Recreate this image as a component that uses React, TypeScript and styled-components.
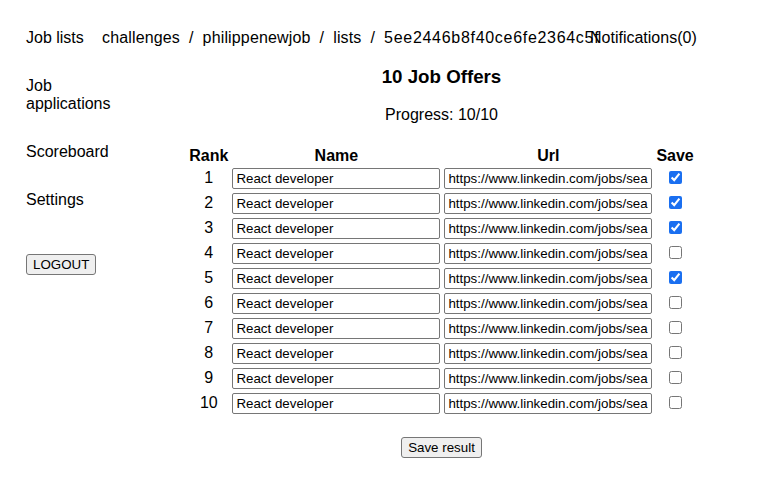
import React from "react";
import styled, { createGlobalStyle } from "styled-components";

const GlobalStyle = createGlobalStyle`
  html, body { margin: 0; padding: 0; background: #ffffff; }
  body {
    margin: 8px;
    font-family: "Liberation Sans", Arial, Helvetica, sans-serif;
    font-size: 16px;
    color: #000000;
  }
`;

const Page = styled.div`
  display: flex;
  flex-direction: column;
`;

const Header = styled.header`
  display: grid;
  grid-template-columns: 76px 488px auto;
  align-items: center;
  padding: 21px 0 0 18px;
  height: 18px;
  line-height: 18px;
  white-space: nowrap;
`;

const HeaderLink = styled.span`
  color: #000;
`;

const Breadcrumb = styled.span`
  overflow: visible;
  white-space: nowrap;
  letter-spacing: 0.15px;
`;

const Sep = styled.span`
  padding: 0 9px;
`;

const Hash = styled.span`
  letter-spacing: 0.7px;
`;

const Body = styled.div`
  display: flex;
  padding-top: 10px;
`;

const Sidebar = styled.nav`
  width: 86px;
  padding: 20px 0 0 18px;
  display: flex;
  flex-direction: column;
  align-items: flex-start;
  gap: 30px;
  line-height: 18px;
`;

const NavItem = styled.span`
  color: #000;
`;

const Button = styled.button`
  font-family: "Liberation Sans", Arial, Helvetica, sans-serif;
  font-size: 13.33px;
  line-height: 15px;
  color: #000;
  background: #efefef;
  border: 1px solid #767676;
  border-radius: 3px;
  padding: 2px 6px;
  cursor: pointer;
`;

const LogoutButton = styled(Button)`
  margin-top: 15px;
`;

const Main = styled.main`
  flex: 1;
  display: flex;
  flex-direction: column;
  align-items: center;
`;

const Title = styled.h3`
  font-size: 18.72px;
  font-weight: bold;
  line-height: 21.5px;
  margin: 9px 0 18px;
`;

const Progress = styled.div`
  line-height: 18px;
  margin-bottom: 19px;
`;

const Table = styled.table`
  border-collapse: separate;
  border-spacing: 2px;
`;

const Th = styled.th`
  padding: 2px 1px 0;
  font-weight: bold;
  line-height: 18px;
  text-align: center;
`;

const Td = styled.td`
  padding: 1px;
  text-align: center;
  line-height: 18px;
`;

const TextInput = styled.input`
  box-sizing: border-box;
  width: 208px;
  height: 21px;
  font-family: "Liberation Sans", Arial, Helvetica, sans-serif;
  font-size: 13.33px;
  color: #000;
  border: 1px solid #767676;
  border-radius: 2px;
  padding: 2px 3px;
  margin: 0;
  display: block;
`;

const Check = styled.input`
  width: 13px;
  height: 13px;
  margin: 3px 3px 3px 4px;
  accent-color: #1a6ff0;
`;

const SaveButton = styled(Button)`
  margin-top: 20px;
`;

const saved = [true, true, true, false, true, false, false, false, false, false];
const url =
  "https://www.linkedin.com/jobs/search/?keywords=react%20developer&location=Paris";

export default function App() {
  return (
    <Page>
      <GlobalStyle />
      <Header>
        <HeaderLink>Job lists</HeaderLink>
        <Breadcrumb>
          challenges<Sep>/</Sep>philippenewjob<Sep>/</Sep>lists<Sep>/</Sep>
          <Hash>5ee2446b8f40ce6fe2364c5f</Hash>
        </Breadcrumb>
        <HeaderLink>Notifications(0)</HeaderLink>
      </Header>
      <Body>
        <Sidebar>
          <NavItem>Job applications</NavItem>
          <NavItem>Scoreboard</NavItem>
          <NavItem>Settings</NavItem>
          <LogoutButton>LOGOUT</LogoutButton>
        </Sidebar>
        <Main>
          <Title>10 Job Offers</Title>
          <Progress>Progress: 10/10</Progress>
          <Table>
            <thead>
              <tr>
                <Th>Rank</Th>
                <Th>Name</Th>
                <Th>Url</Th>
                <Th>Save</Th>
              </tr>
            </thead>
            <tbody>
              {saved.map((s, i) => (
                <tr key={i}>
                  <Td>{i + 1}</Td>
                  <Td>
                    <TextInput defaultValue="React developer" />
                  </Td>
                  <Td>
                    <TextInput defaultValue={url} />
                  </Td>
                  <Td>
                    <Check type="checkbox" defaultChecked={s} />
                  </Td>
                </tr>
              ))}
            </tbody>
          </Table>
          <SaveButton>Save result</SaveButton>
        </Main>
      </Body>
    </Page>
  );
}
